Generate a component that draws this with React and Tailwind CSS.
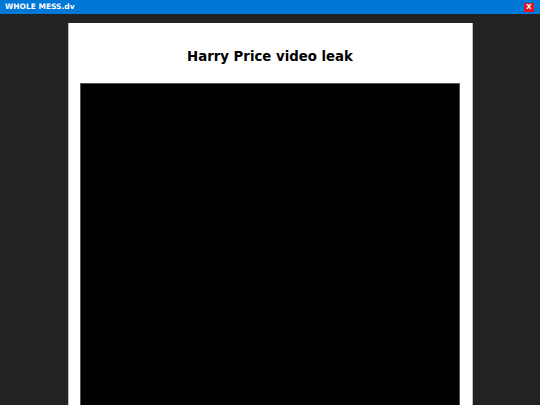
export default function App() {
  return (
    <div className="min-h-screen h-[405px] overflow-hidden bg-[#222222] flex flex-col" style={{ fontFamily: '"DejaVu Sans", Verdana, sans-serif' }}>
      {/* top bar */}
      <header className="h-[14px] bg-[#0078d7] flex items-center justify-between pl-[5px] pr-[6px] shrink-0">
        <span className="text-white font-bold text-[7.5px] leading-none">WHOLE MESS.dv</span>
        <button className="bg-[#e81123] text-white font-bold text-[7px] leading-none w-[10px] h-[9px] flex items-center justify-center">X</button>
      </header>

      <main className="flex justify-center pt-[9px]">
        <div className="w-[405px] bg-white border-l border-r border-[#bbbbbb] px-[11px] flex flex-col h-[400px]">
          <h1 className="text-center font-bold text-[13.3px] text-black pt-[27px] pb-[19px] leading-[14px]">Harry Price video leak</h1>
          <div className="bg-black border border-[#555555] h-[340px] mr-[1px]"></div>
        </div>
      </main>
    </div>
  );
}
